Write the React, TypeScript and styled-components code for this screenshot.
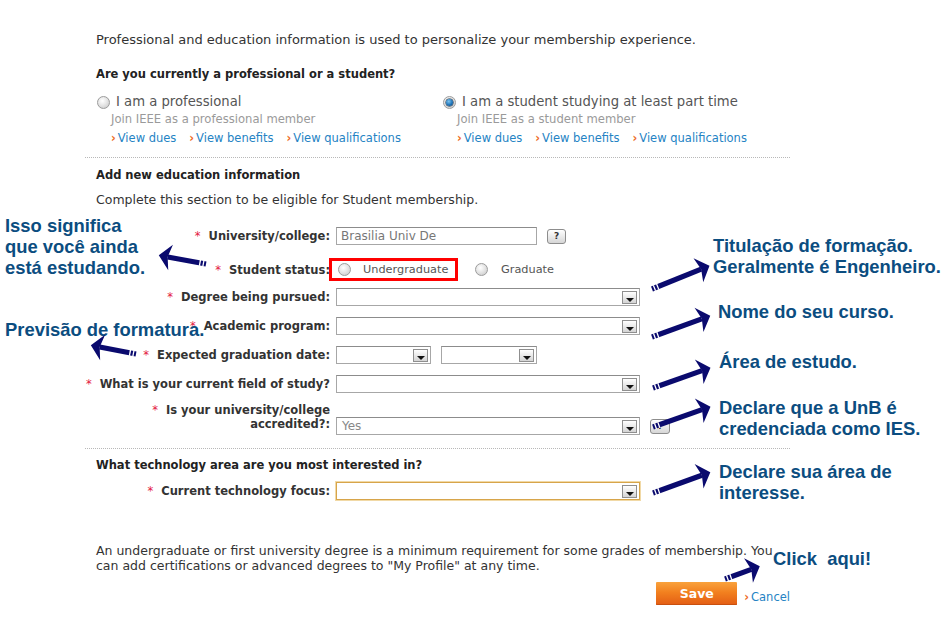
import React from "react";
import styled, { createGlobalStyle } from "styled-components";

const GlobalStyle = createGlobalStyle`
  html, body { margin: 0; padding: 0; background: #fff; }
  body { font-family: "DejaVu Sans", Verdana, sans-serif; color: #333; }
`;

const Page = styled.div`
  position: relative;
  width: 941px;
  height: 620px;
  overflow: hidden;
  background: #fff;
`;

const Main = styled.div`
  margin-left: 85px;
  width: 705px;
  padding-top: 32px;
`;

const Text = styled.p<{ $mt?: number; $fs: number }>`
  margin: ${(p) => p.$mt ?? 0}px 0 0 11px;
  font-size: ${(p) => p.$fs}px;
  line-height: 16px;
  color: #333;
`;

const Heading = styled.h3<{ $mt: number }>`
  margin: ${(p) => p.$mt}px 0 0 11px;
  font-size: 11.5px;
  line-height: 16px;
  font-weight: bold;
  color: #222;
`;

const Options = styled.div`
  display: grid;
  grid-template-columns: 346px 1fr;
  margin: 12px 0 0 12px;
`;

const Option = styled.div`
  display: flex;
  flex-direction: column;
`;

const RadioLine = styled.label`
  display: flex;
  align-items: center;
  gap: 6px;
  font-size: 13.2px;
  line-height: 16px;
  color: #555;
`;

const Radio = styled.span<{ $checked?: boolean }>`
  position: relative;
  display: inline-block;
  width: 11px;
  height: 11px;
  border-radius: 50%;
  border: 1px solid #9c9c9c;
  background: radial-gradient(circle at 40% 35%, #ffffff 0%, #e6e6e6 45%, #c4c4c4 100%);
  flex: none;
  &::after {
    content: "";
    display: ${(p) => (p.$checked ? "block" : "none")};
    position: absolute;
    left: 2px;
    top: 2px;
    width: 7px;
    height: 7px;
    border-radius: 50%;
    background: radial-gradient(circle at 40% 35%, #7cc4f0 0%, #1f74b8 55%, #0b3f73 100%);
    box-shadow: 0 0 0 0.5px #123;
  }
`;

const Sub = styled.div<{ $mt: number }>`
  margin: ${(p) => p.$mt}px 0 0 14px;
  font-size: 11.6px;
  line-height: 15px;
  color: #9a9a9a;
`;

const Links = styled.div`
  display: flex;
  gap: 13px;
  margin: 4px 0 0 14px;
  font-size: 11.5px;
  line-height: 15px;
`;

const Link = styled.a`
  color: #2583c4;
  text-decoration: none;
  white-space: nowrap;
  &::before {
    content: "›";
    color: #ee6a1e;
    font-weight: bold;
    margin-right: 2px;
  }
`;

const Divider = styled.hr<{ $mt: number }>`
  margin: ${(p) => p.$mt}px 0 0 0;
  border: none;
  border-top: 1px dotted #b8b8b8;
  height: 0;
`;

const Row = styled.div<{ $mt: number; $end?: boolean }>`
  display: grid;
  grid-template-columns: 245px 1fr;
  column-gap: 6px;
  align-items: ${(p) => (p.$end ? "end" : "center")};
  margin-top: ${(p) => p.$mt}px;
`;

const Label = styled.div<{ $pb?: number }>`
  text-align: right;
  font-size: 11.5px;
  line-height: 14px;
  font-weight: bold;
  color: #333;
  padding-bottom: ${(p) => p.$pb ?? 0}px;
  white-space: nowrap;
`;

const Req = styled.span`
  color: #e3173e;
  font-weight: normal;
  margin-right: 8px;
`;

const Field = styled.div`
  display: flex;
  align-items: center;
  gap: 10px;
`;

const Input = styled.div<{ $w: number }>`
  box-sizing: border-box;
  width: ${(p) => p.$w}px;
  height: 18px;
  border: 1px solid #a7a7a7;
  border-top-color: #8c8c8c;
  padding: 0 4px;
  font-size: 12px;
  line-height: 16px;
  color: #777;
  background: #fff;
`;

const SelectBox = styled.div<{ $w: number; $focus?: boolean }>`
  box-sizing: border-box;
  display: flex;
  align-items: center;
  justify-content: space-between;
  width: ${(p) => p.$w}px;
  height: 18px;
  border: 1px solid ${(p) => (p.$focus ? "#d7a54a" : "#a7a7a7")};
  border-top-color: ${(p) => (p.$focus ? "#d7a54a" : "#8c8c8c")};
  box-shadow: ${(p) => (p.$focus ? "0 0 0 1px #f1d9a6" : "none")};
  padding: 0 2px 0 5px;
  font-size: 12px;
  color: #888;
  background: #fff;
`;

const DropBtn = styled.span`
  position: relative;
  box-sizing: border-box;
  width: 15px;
  height: 13px;
  border: 1px solid #8f8f8f;
  background: linear-gradient(#ffffff, #d4d4d4);
  flex: none;
  &::after {
    content: "";
    position: absolute;
    left: 3px;
    top: 6px;
    border-left: 4px solid transparent;
    border-right: 4px solid transparent;
    border-top: 4px solid #111;
  }
`;

const HelpBtn = styled.span<{ $w?: number }>`
  box-sizing: border-box;
  display: inline-flex;
  align-items: center;
  justify-content: center;
  width: ${(p) => p.$w ?? 19}px;
  height: 15px;
  border: 1px solid #8d8d8d;
  border-radius: 3px;
  background: linear-gradient(#ffffff, #d6d6d6);
  font-size: 9px;
  font-weight: bold;
  color: #333;
`;

const StatusGroup = styled.div`
  display: flex;
  align-items: center;
`;

const Highlight = styled.div`
  box-sizing: border-box;
  display: flex;
  align-items: center;
  width: 129px;
  height: 23px;
  margin-left: -7px;
  border: 3px solid #ff0000;
  padding: 0 0 0 6px;
  gap: 12px;
`;

const StatusOpt = styled.span`
  font-size: 11.3px;
  color: #555;
`;

const GradOpt = styled.div`
  display: flex;
  align-items: center;
  gap: 13px;
  margin-left: 17px;
`;

const Para = styled.p`
  margin: 43px 0 0 11px;
  width: 690px;
  font-size: 12.5px;
  line-height: 15px;
  color: #333;
`;

const Actions = styled.div`
  display: flex;
  align-items: flex-end;
  justify-content: flex-end;
  gap: 7px;
  margin-top: 9px;
`;

const SaveBtn = styled.button`
  width: 81px;
  height: 23px;
  border: none;
  border-radius: 1px;
  background: linear-gradient(#f9a23c 0%, #f2801f 45%, #e35d14 100%);
  box-shadow: inset 0 -1px 0 #c9500f;
  color: #fff;
  font-family: "DejaVu Sans", Verdana, sans-serif;
  font-weight: bold;
  font-size: 12.5px;
  padding: 0;
`;

const CancelLink = styled(Link)`
  font-size: 11.5px;
  line-height: 14px;
  margin-bottom: 1px;
`;

/* ---------- annotations overlay ---------- */

const Note = styled.div<{ $x: number; $y: number }>`
  position: absolute;
  left: ${(p) => p.$x}px;
  top: ${(p) => p.$y}px;
  font-family: "Liberation Sans", Arial, sans-serif;
  font-weight: bold;
  font-size: 18.4px;
  line-height: 21px;
  color: #0b4d80;
  white-space: pre;
`;

const ArrowSvg = styled.svg`
  position: absolute;
  overflow: visible;
  transform-origin: 0 20px;
`;

function Arrow({ x, y, len, angle }: { x: number; y: number; len: number; angle: number }) {
  const h = 20;
  return (
    <ArrowSvg
      width={len + 12}
      height={40}
      style={{ left: x, top: y - h, transform: `rotate(${angle}deg)` }}
      viewBox={`0 0 ${len + 12} 40`}
    >
      <rect x={0} y={h - 2.6} width={len} height={5.2} fill="#0a0a6e" />
      <path
        d={`M ${len - 3} ${h - 13} L ${len + 9} ${h} L ${len - 3} ${h + 13} L ${len} ${h} Z`}
        fill="#0a0a6e"
      />
      <rect x={2} y={h - 3} width={1.3} height={6} fill="#fff" />
      <rect x={5.5} y={h - 3} width={1.3} height={6} fill="#fff" />
    </ArrowSvg>
  );
}

export default function App() {
  return (
    <Page>
      <GlobalStyle />
      <Main>
        <Text $fs={13}>Professional and education information is used to personalize your membership experience.</Text>
        <Heading $mt={18}>Are you currently a professional or a student?</Heading>
        <Options>
          <Option>
            <RadioLine>
              <Radio />I am a professional
            </RadioLine>
            <Sub $mt={2}>Join IEEE as a professional member</Sub>
            <Links>
              <Link>View dues</Link>
              <Link>View benefits</Link>
              <Link>View qualifications</Link>
            </Links>
          </Option>
          <Option>
            <RadioLine>
              <Radio $checked />I am a student studying at least part time
            </RadioLine>
            <Sub $mt={2}>Join IEEE as a student member</Sub>
            <Links>
              <Link>View dues</Link>
              <Link>View benefits</Link>
              <Link>View qualifications</Link>
            </Links>
          </Option>
        </Options>
        <Divider $mt={11} />
        <Heading $mt={9}>Add new education information</Heading>
        <Text $mt={9} $fs={12.5}>Complete this section to be eligible for Student membership.</Text>

        <Row $mt={19}>
          <Label>
            <Req>*</Req>University/college:
          </Label>
          <Field>
            <Input $w={201}>Brasilia Univ De</Input>
            <HelpBtn>?</HelpBtn>
          </Field>
        </Row>
        <Row $mt={13}>
          <Label>
            <Req>*</Req>Student status:
          </Label>
          <StatusGroup>
            <Highlight>
              <Radio />
              <StatusOpt>Undergraduate</StatusOpt>
            </Highlight>
            <GradOpt>
              <Radio />
              <StatusOpt>Graduate</StatusOpt>
            </GradOpt>
          </StatusGroup>
        </Row>
        <Row $mt={7}>
          <Label>
            <Req>*</Req>Degree being pursued:
          </Label>
          <Field>
            <SelectBox $w={304}>
              <span />
              <DropBtn />
            </SelectBox>
          </Field>
        </Row>
        <Row $mt={11}>
          <Label>
            <Req>*</Req>Academic program:
          </Label>
          <Field>
            <SelectBox $w={304}>
              <span />
              <DropBtn />
            </SelectBox>
          </Field>
        </Row>
        <Row $mt={11}>
          <Label>
            <Req>*</Req>Expected graduation date:
          </Label>
          <Field>
            <SelectBox $w={95}>
              <span />
              <DropBtn />
            </SelectBox>
            <SelectBox $w={96}>
              <span />
              <DropBtn />
            </SelectBox>
          </Field>
        </Row>
        <Row $mt={11}>
          <Label>
            <Req>*</Req>What is your current field of study?
          </Label>
          <Field>
            <SelectBox $w={304}>
              <span />
              <DropBtn />
            </SelectBox>
          </Field>
        </Row>
        <Row $mt={10} $end>
          <Label $pb={4}>
            <Req>*</Req>Is your university/college
            <br />
            accredited?:
          </Label>
          <Field>
            <SelectBox $w={304}>
              <span>Yes</span>
              <DropBtn />
            </SelectBox>
            <HelpBtn $w={20}>?</HelpBtn>
          </Field>
        </Row>
        <Divider $mt={13} />
        <Heading $mt={8}>What technology area are you most interested in?</Heading>
        <Row $mt={9}>
          <Label>
            <Req>*</Req>Current technology focus:
          </Label>
          <Field>
            <SelectBox $w={304} $focus>
              <span />
              <DropBtn />
            </SelectBox>
          </Field>
        </Row>
        <Para>
          An undergraduate or first university degree is a minimum requirement for some grades of membership. You
          can add certifications or advanced degrees to "My Profile" at any time.
        </Para>
        <Actions>
          <SaveBtn>Save</SaveBtn>
          <CancelLink>Cancel</CancelLink>
        </Actions>
      </Main>

      <Note $x={5} $y={215}>{"Isso significa\nque você ainda\nestá estudando."}</Note>
      <Note $x={5} $y={319}>Previsão de formatura.</Note>
      <Note $x={713} $y={235}>{"Titulação de formação.\nGeralmente é Engenheiro."}</Note>
      <Note $x={718} $y={301}>Nome do seu curso.</Note>
      <Note $x={719} $y={351}>Área de estudo.</Note>
      <Note $x={719} $y={397}>{"Declare que a UnB é\ncredenciada como IES."}</Note>
      <Note $x={719} $y={461}>{"Declare sua área de\ninteresse."}</Note>
      <Note $x={773} $y={548}>Click  aqui!</Note>

      <Arrow x={206} y={264} len={39} angle={190.4} />
      <Arrow x={136} y={354} len={37} angle={191} />
      <Arrow x={652} y={289} len={53} angle={-22} />
      <Arrow x={652} y={337} len={53} angle={-20} />
      <Arrow x={653} y={388} len={52} angle={-19.5} />
      <Arrow x={653} y={427} len={52} angle={-19.5} />
      <Arrow x={653} y={493} len={52} angle={-20} />
      <Arrow x={725} y={579} len={28} angle={-20} />
    </Page>
  );
}
